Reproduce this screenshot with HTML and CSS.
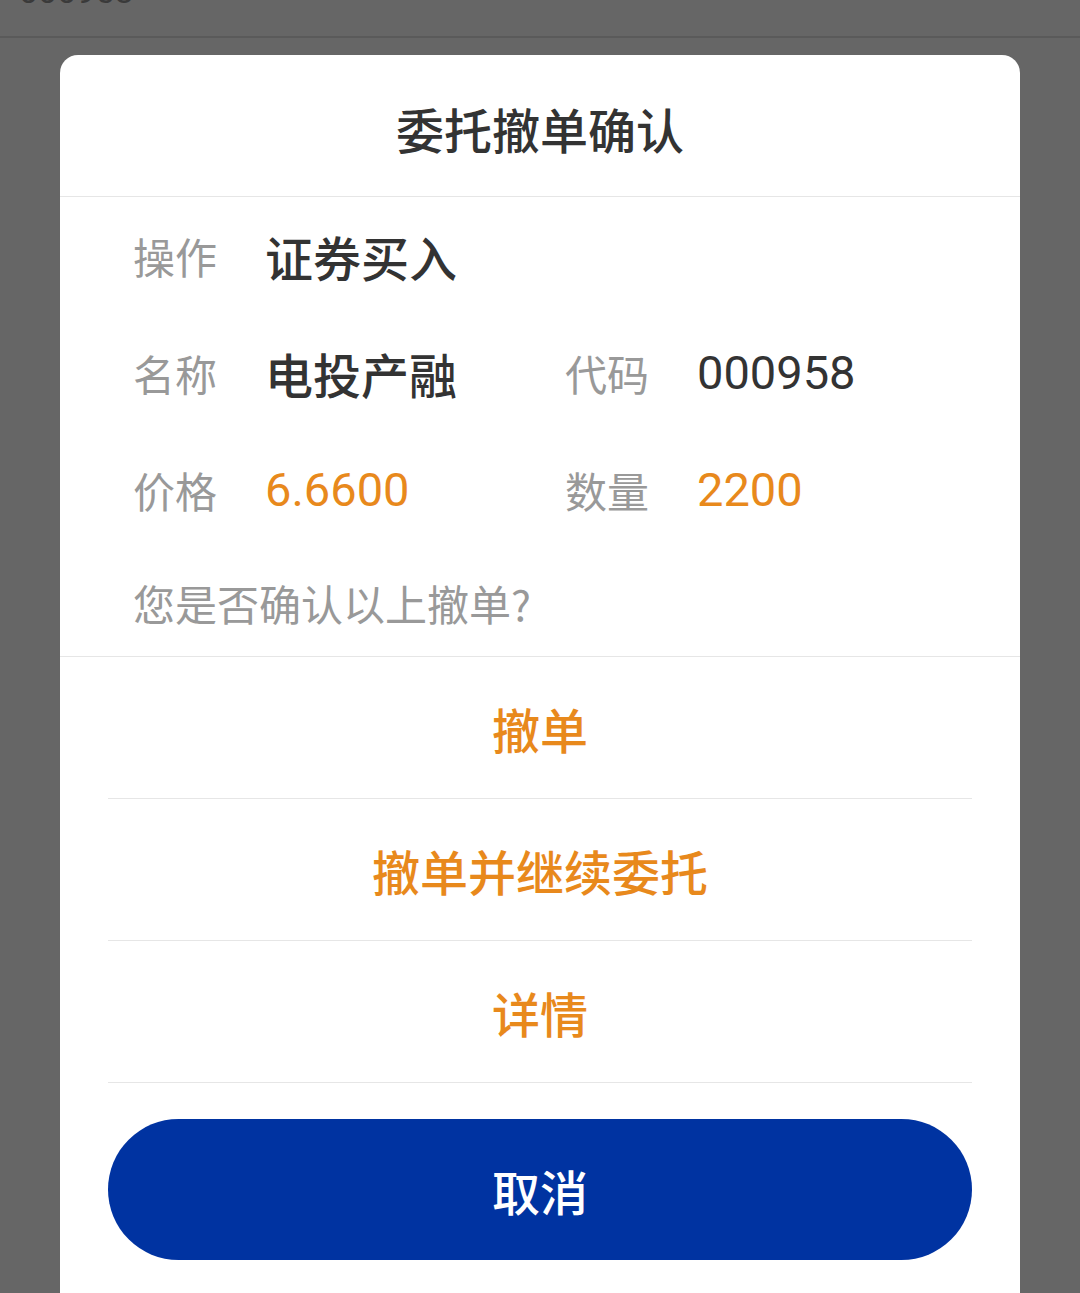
FILE: index.html
```html
<!DOCTYPE html>
<html lang="zh-CN">
<head>
    <meta charset="UTF-8">
    <meta name="viewport" content="width=device-width, initial-scale=1.0">
    <title>委托撤单确认</title>
    <link rel="stylesheet" href="styles.css">
</head>
<body>
    <div class="page-strip">
        <span class="strip-code">000958</span>
    </div>
    <div class="dialog">
        <div class="dialog-title">委托撤单确认</div>
        <div class="info-container">
            <div class="info-row">
                <div class="info-cell">
                    <span class="info-label">操作</span>
                    <span class="info-value">证券买入</span>
                </div>
            </div>
            <div class="info-row">
                <div class="info-cell">
                    <span class="info-label">名称</span>
                    <span class="info-value">电投产融</span>
                </div>
                <div class="info-cell">
                    <span class="info-label">代码</span>
                    <span class="info-value number">000958</span>
                </div>
            </div>
            <div class="info-row">
                <div class="info-cell">
                    <span class="info-label">价格</span>
                    <span class="info-value number highlight">6.6600</span>
                </div>
                <div class="info-cell">
                    <span class="info-label">数量</span>
                    <span class="info-value number highlight">2200</span>
                </div>
            </div>
            <p class="question">您是否确认以上撤单?</p>
        </div>
        <div class="action-list">
            <button class="action-item">撤单</button>
            <button class="action-item">撤单并继续委托</button>
            <button class="action-item">详情</button>
        </div>
        <div class="cancel-container">
            <button class="cancel-button">取消</button>
        </div>
    </div>
</body>
</html>
```

FILE: styles.css
```css
body {
    margin: 0;
    height: 1293px;
    overflow: hidden;
    background: #666666;
    font-family: "Noto Sans CJK SC", "Noto Sans", sans-serif;
}

.page-strip {
    height: 36px;
    border-bottom: 2px solid #5a5a5a;
    overflow: hidden;
    position: relative;
}

/* code of the page under the dialog, mostly scrolled away */
.strip-code {
    position: absolute;
    left: 19px;
    bottom: 28px;
    font-family: Roboto, "Noto Sans", sans-serif;
    font-size: 34px;
    line-height: 1;
    color: #3a3a3a;
}

.dialog {
    margin: 17px 60px 0;
    background: #fff;
    border-radius: 18px 18px 0 0;
    height: 1300px;
}

.dialog-title {
    height: 142px;
    border-bottom: 1px solid #e6e6e6;
    display: flex;
    align-items: center;
    justify-content: center;
    padding-top: 4px;
    box-sizing: border-box;
    font-size: 48px;
    font-weight: 500;
    color: #333;
}

.info-container {
    padding: 0 73px;
    border-bottom: 1px solid #e6e6e6;
}

.info-row {
    display: grid;
    grid-template-columns: 432px 1fr;
    height: 117px;
    align-items: center;
}

.info-cell {
    display: flex;
    align-items: center;
}

.info-label {
    width: 132px;
    flex-shrink: 0;
    font-size: 42px;
    color: #999;
}

.info-value {
    font-size: 48px;
    font-weight: 500;
    color: #333;
}

.number {
    font-family: Roboto, "Noto Sans", sans-serif;
    font-weight: 400;
    font-size: 47px;
}

.highlight {
    color: #e8891c; /* orange */
}

.question {
    margin: 0;
    height: 108px;
    display: flex;
    align-items: center;
    font-size: 42px;
    color: #999;
}

.action-list {
    padding: 0 48px;
    display: flex;
    flex-direction: column;
}

.action-item {
    height: 142px;
    border: none;
    border-bottom: 1px solid #e6e6e6;
    background: none;
    font-family: inherit;
    font-size: 48px;
    font-weight: 500;
    color: #e8891c;
    padding: 0;
}

.cancel-container {
    padding: 36px 48px 0;
}

.cancel-button {
    width: 100%;
    height: 141px;
    border: none;
    border-radius: 71px;
    background-color: #0033a1;
    color: #fff;
    font-family: inherit;
    font-size: 48px;
    font-weight: 500;
}
```
